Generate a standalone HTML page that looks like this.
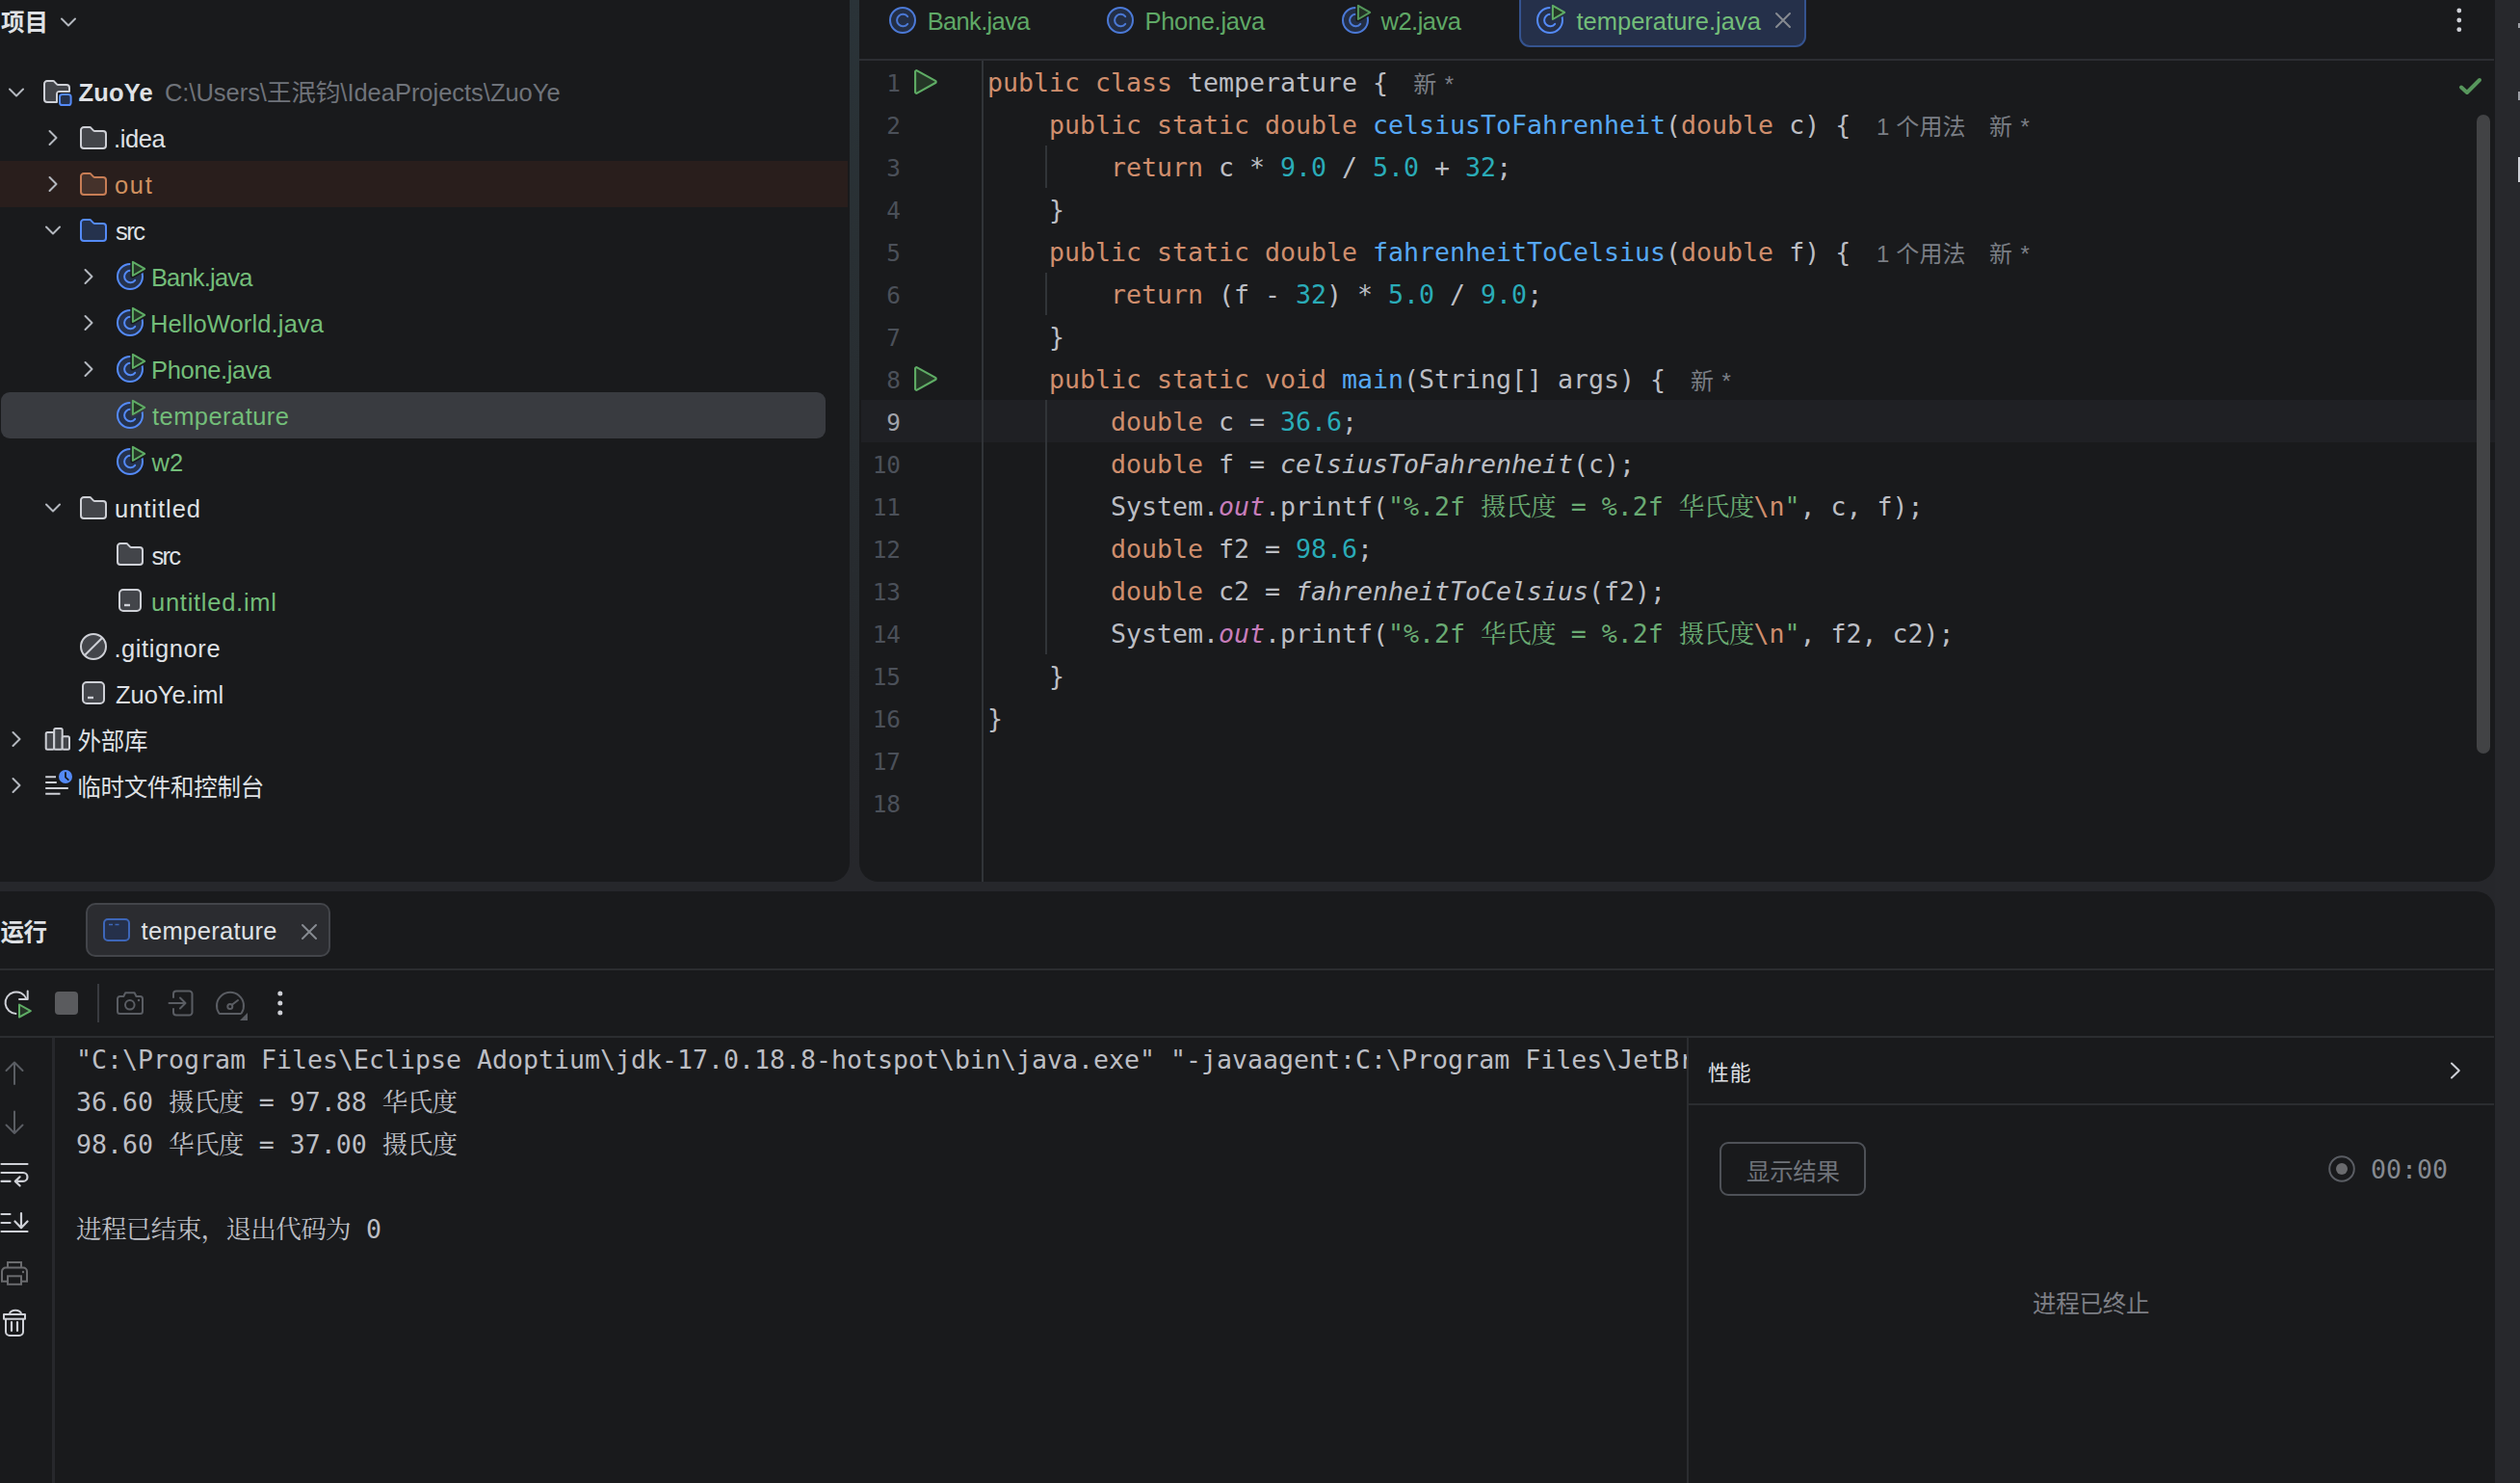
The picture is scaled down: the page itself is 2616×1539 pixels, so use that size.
<!DOCTYPE html>
<html lang="zh-CN"><head><meta charset="utf-8"><title>ZuoYe – temperature.java</title>
<style>
*{box-sizing:border-box}
html,body{margin:0;padding:0}
body{width:2616px;height:1539px;overflow:hidden;position:relative;background:#26272b;
 font-family:"Liberation Sans","Noto Sans CJK SC",sans-serif;font-size:25px;color:#dfe1e5;}
.abs{position:absolute}
.panel{position:absolute;background:#191a1c;border-radius:20px}
.t{position:absolute;white-space:pre;line-height:48px;height:48px}
.ui{font-family:"Liberation Sans","Noto Sans CJK SC",sans-serif;font-size:25.5px}
.cjk{font-family:"Noto Sans CJK SC","Liberation Sans",sans-serif;font-size:24.5px}
.mono{font-family:"DejaVu Sans Mono","Liberation Mono","Noto Serif CJK SC",monospace;font-size:26.58px}
.ic{position:absolute;width:32px;height:32px;overflow:visible}
.grn{color:#73bd79}
.gray{color:#6f737a}
.row{position:absolute;left:0;height:48px}
.cl{position:absolute;left:1025px;height:44px;line-height:44px;white-space:pre;color:#bcbec4;
 font-family:"DejaVu Sans Mono","Liberation Mono","Noto Serif CJK SC",monospace;font-size:26.58px}
.cl .z{letter-spacing:-0.67px}
.k{color:#cf8e6d}.f{color:#56a8f5}.n{color:#2aacb8}.s{color:#6aab73}.o{color:#c77dbb;font-style:italic}.i{font-style:italic}
.ln{position:absolute;width:60px;text-align:right;height:44px;line-height:44px;color:#4b5059;
 font-family:"DejaVu Sans Mono","Liberation Mono",monospace;font-size:24.4px}
.hint{position:absolute;height:44px;line-height:44px;white-space:pre;color:#7a7e85;
 font-family:"Liberation Sans","Noto Sans CJK SC",sans-serif;font-size:24px}
.con{position:absolute;left:79px;height:44px;line-height:44px;white-space:pre;color:#bcbec4;
 font-family:"DejaVu Sans Mono","Liberation Mono","Noto Serif CJK SC",monospace;font-size:26.58px}
.con .z{letter-spacing:-0.67px}
.hl{position:absolute;background:#2b2d30}
</style></head>
<body>
<div class="abs" style="left:878px;top:0;width:18px;height:920px;background:linear-gradient(#2a3338 0px,#293034 250px,#272b2f 600px,#26272b 900px)"></div>
<div class="panel" style="left:-40px;top:-40px;width:922px;height:955px"></div>
<div class="panel" style="left:892px;top:-40px;width:1698px;height:955px"></div>
<div class="panel" style="left:-40px;top:925px;width:2630px;height:700px"></div>
<div class="t" id="hdr" style="left:1.10px;top:-0.55px;letter-spacing:-0.200px;font-weight:bold;font-family:'Noto Sans CJK SC',sans-serif;font-size:24.5px;height:46px;line-height:46px">项目</div>
<svg class="ic" style="left:55.00px;top:7.00px;width:32px;height:32px" viewBox="0 0 16 16" fill="none"><path d="M4.5 6.25L8 9.75L11.5 6.25" stroke="#b4b8bf" stroke-width="1" stroke-linecap="round" stroke-linejoin="round"/></svg>
<div class="abs" style="left:0;top:167px;width:880px;height:48px;background:#291e1c"></div>
<div class="abs" style="left:1px;top:407px;width:856px;height:48px;background:#393b40;border-radius:9px"></div>
<svg class="ic" style="left:1.00px;top:79.50px;width:32px;height:32px" viewBox="0 0 16 16" fill="none"><path d="M4.5 6.25L8 9.75L11.5 6.25" stroke="#b4b8bf" stroke-width="1" stroke-linecap="round" stroke-linejoin="round"/></svg>
<svg class="ic" style="left:42.70px;top:79.20px;width:32px;height:32px" viewBox="0 0 16 16" fill="none"><path d="M1.5 4A1.5 1.5 0 0 1 3 2.5H6.1a.6.6 0 0 1 .42.17L8.1 4.3a.7.7 0 0 0 .5.2H13A1.5 1.5 0 0 1 14.5 6V8H9.5A1.5 1.5 0 0 0 8 9.5V13.5H3A1.5 1.5 0 0 1 1.5 12Z" fill="#43454a" stroke="#ced0d6" stroke-linejoin="round"/><rect x="8.6" y="8.6" width="7.4" height="7.4" fill="#191a1c"/><rect x="9.5" y="9.5" width="5.8" height="5.5" rx="1.3" fill="#25324d" stroke="#548af7"/></svg>
<div class="t ui " id="tr0b" style="left:81.40px;top:71.75px;letter-spacing:0.175px;font-weight:bold;">ZuoYe</div>
<svg class="ic" style="left:39.20px;top:127.48px;width:32px;height:32px" viewBox="0 0 16 16" fill="none"><path d="M6.25 4.5L9.75 8L6.25 11.5" stroke="#b4b8bf" stroke-width="1" stroke-linecap="round" stroke-linejoin="round"/></svg>
<svg class="ic" style="left:81.00px;top:127.18px;width:32px;height:32px" viewBox="0 0 16 16" fill="none"><path d="M1.5 4A1.5 1.5 0 0 1 3 2.5H6.1a.6.6 0 0 1 .42.17L8.1 4.3a.7.7 0 0 0 .5.2H13A1.5 1.5 0 0 1 14.5 6v6A1.5 1.5 0 0 1 13 13.5H3A1.5 1.5 0 0 1 1.5 12Z" fill="#43454a" stroke="#ced0d6" stroke-width="1" stroke-linejoin="round"/></svg>
<div class="t ui " id="tr1" style="left:118.00px;top:119.50px;letter-spacing:-0.375px;">.idea</div>
<svg class="ic" style="left:39.20px;top:175.45px;width:32px;height:32px" viewBox="0 0 16 16" fill="none"><path d="M6.25 4.5L9.75 8L6.25 11.5" stroke="#b4b8bf" stroke-width="1" stroke-linecap="round" stroke-linejoin="round"/></svg>
<svg class="ic" style="left:81.00px;top:175.15px;width:32px;height:32px" viewBox="0 0 16 16" fill="none"><path d="M1.5 4A1.5 1.5 0 0 1 3 2.5H6.1a.6.6 0 0 1 .42.17L8.1 4.3a.7.7 0 0 0 .5.2H13A1.5 1.5 0 0 1 14.5 6v6A1.5 1.5 0 0 1 13 13.5H3A1.5 1.5 0 0 1 1.5 12Z" fill="#45322b" stroke="#c77d55" stroke-width="1" stroke-linejoin="round"/></svg>
<div class="t ui " id="tr2" style="left:119.00px;top:168.00px;letter-spacing:1.650px;color:#d0905f;">out</div>
<svg class="ic" style="left:39.00px;top:223.43px;width:32px;height:32px" viewBox="0 0 16 16" fill="none"><path d="M4.5 6.25L8 9.75L11.5 6.25" stroke="#b4b8bf" stroke-width="1" stroke-linecap="round" stroke-linejoin="round"/></svg>
<svg class="ic" style="left:81.00px;top:223.12px;width:32px;height:32px" viewBox="0 0 16 16" fill="none"><path d="M1.5 4A1.5 1.5 0 0 1 3 2.5H6.1a.6.6 0 0 1 .42.17L8.1 4.3a.7.7 0 0 0 .5.2H13A1.5 1.5 0 0 1 14.5 6v6A1.5 1.5 0 0 1 13 13.5H3A1.5 1.5 0 0 1 1.5 12Z" fill="#25324d" stroke="#548af7" stroke-width="1" stroke-linejoin="round"/></svg>
<div class="t ui " id="tr3" style="left:120.00px;top:216.00px;letter-spacing:-1.550px;">src</div>
<svg class="ic" style="left:76.10px;top:271.40px;width:32px;height:32px" viewBox="0 0 16 16" fill="none"><path d="M6.25 4.5L9.75 8L6.25 11.5" stroke="#b4b8bf" stroke-width="1" stroke-linecap="round" stroke-linejoin="round"/></svg>
<svg class="ic" style="left:118.80px;top:271.10px;width:32px;height:32px" viewBox="0 0 16 16" fill="none"><circle cx="8" cy="8" r="6.5" fill="#25324d" stroke="#548af7"/><path d="M10.6 9.9A3.1 3.1 0 1 1 10.6 6.1" stroke="#548af7" stroke-width="1" fill="none" stroke-linecap="round"/><path d="M9.45 0.4V7.5L15.6 3.95Z" fill="#191a1c" stroke="#191a1c" stroke-width="2.6" stroke-linejoin="round"/><path d="M9.45 0.4V7.5L15.6 3.95Z" fill="#253627" stroke="#5fad65" stroke-width="1" stroke-linejoin="round"/></svg>
<div class="t ui grn" id="tr4" style="left:156.90px;top:264.00px;letter-spacing:-0.812px;">Bank.java</div>
<svg class="ic" style="left:76.10px;top:319.38px;width:32px;height:32px" viewBox="0 0 16 16" fill="none"><path d="M6.25 4.5L9.75 8L6.25 11.5" stroke="#b4b8bf" stroke-width="1" stroke-linecap="round" stroke-linejoin="round"/></svg>
<svg class="ic" style="left:118.80px;top:319.07px;width:32px;height:32px" viewBox="0 0 16 16" fill="none"><circle cx="8" cy="8" r="6.5" fill="#25324d" stroke="#548af7"/><path d="M10.6 9.9A3.1 3.1 0 1 1 10.6 6.1" stroke="#548af7" stroke-width="1" fill="none" stroke-linecap="round"/><path d="M9.45 0.4V7.5L15.6 3.95Z" fill="#191a1c" stroke="#191a1c" stroke-width="2.6" stroke-linejoin="round"/><path d="M9.45 0.4V7.5L15.6 3.95Z" fill="#253627" stroke="#5fad65" stroke-width="1" stroke-linejoin="round"/></svg>
<div class="t ui grn" id="tr5" style="left:156.00px;top:312.00px;letter-spacing:0.137px;">HelloWorld.java</div>
<svg class="ic" style="left:76.10px;top:367.35px;width:32px;height:32px" viewBox="0 0 16 16" fill="none"><path d="M6.25 4.5L9.75 8L6.25 11.5" stroke="#b4b8bf" stroke-width="1" stroke-linecap="round" stroke-linejoin="round"/></svg>
<svg class="ic" style="left:118.80px;top:367.05px;width:32px;height:32px" viewBox="0 0 16 16" fill="none"><circle cx="8" cy="8" r="6.5" fill="#25324d" stroke="#548af7"/><path d="M10.6 9.9A3.1 3.1 0 1 1 10.6 6.1" stroke="#548af7" stroke-width="1" fill="none" stroke-linecap="round"/><path d="M9.45 0.4V7.5L15.6 3.95Z" fill="#191a1c" stroke="#191a1c" stroke-width="2.6" stroke-linejoin="round"/><path d="M9.45 0.4V7.5L15.6 3.95Z" fill="#253627" stroke="#5fad65" stroke-width="1" stroke-linejoin="round"/></svg>
<div class="t ui grn" id="tr6" style="left:157.10px;top:360.00px;letter-spacing:-0.357px;">Phone.java</div>
<svg class="ic" style="left:118.80px;top:415.02px;width:32px;height:32px" viewBox="0 0 16 16" fill="none"><circle cx="8" cy="8" r="6.5" fill="#25324d" stroke="#548af7"/><path d="M10.6 9.9A3.1 3.1 0 1 1 10.6 6.1" stroke="#548af7" stroke-width="1" fill="none" stroke-linecap="round"/><path d="M9.45 0.4V7.5L15.6 3.95Z" fill="#393b40" stroke="#393b40" stroke-width="2.6" stroke-linejoin="round"/><path d="M9.45 0.4V7.5L15.6 3.95Z" fill="#253627" stroke="#5fad65" stroke-width="1" stroke-linejoin="round"/></svg>
<div class="t ui grn" id="tr7" style="left:158.00px;top:408.00px;letter-spacing:0.440px;">temperature</div>
<svg class="ic" style="left:118.80px;top:463.00px;width:32px;height:32px" viewBox="0 0 16 16" fill="none"><circle cx="8" cy="8" r="6.5" fill="#25324d" stroke="#548af7"/><path d="M10.6 9.9A3.1 3.1 0 1 1 10.6 6.1" stroke="#548af7" stroke-width="1" fill="none" stroke-linecap="round"/><path d="M9.45 0.4V7.5L15.6 3.95Z" fill="#191a1c" stroke="#191a1c" stroke-width="2.6" stroke-linejoin="round"/><path d="M9.45 0.4V7.5L15.6 3.95Z" fill="#253627" stroke="#5fad65" stroke-width="1" stroke-linejoin="round"/></svg>
<div class="t ui grn" id="tr8" style="left:157.50px;top:456.00px;">w2</div>
<svg class="ic" style="left:39.00px;top:511.28px;width:32px;height:32px" viewBox="0 0 16 16" fill="none"><path d="M4.5 6.25L8 9.75L11.5 6.25" stroke="#b4b8bf" stroke-width="1" stroke-linecap="round" stroke-linejoin="round"/></svg>
<svg class="ic" style="left:81.00px;top:510.98px;width:32px;height:32px" viewBox="0 0 16 16" fill="none"><path d="M1.5 4A1.5 1.5 0 0 1 3 2.5H6.1a.6.6 0 0 1 .42.17L8.1 4.3a.7.7 0 0 0 .5.2H13A1.5 1.5 0 0 1 14.5 6v6A1.5 1.5 0 0 1 13 13.5H3A1.5 1.5 0 0 1 1.5 12Z" fill="#43454a" stroke="#ced0d6" stroke-width="1" stroke-linejoin="round"/></svg>
<div class="t ui " id="tr9" style="left:119.00px;top:503.50px;letter-spacing:0.971px;">untitled</div>
<svg class="ic" style="left:118.80px;top:558.95px;width:32px;height:32px" viewBox="0 0 16 16" fill="none"><path d="M1.5 4A1.5 1.5 0 0 1 3 2.5H6.1a.6.6 0 0 1 .42.17L8.1 4.3a.7.7 0 0 0 .5.2H13A1.5 1.5 0 0 1 14.5 6v6A1.5 1.5 0 0 1 13 13.5H3A1.5 1.5 0 0 1 1.5 12Z" fill="#43454a" stroke="#ced0d6" stroke-width="1" stroke-linejoin="round"/></svg>
<div class="t ui " id="tr10" style="left:157.50px;top:553.00px;letter-spacing:-1.700px;">src</div>
<svg class="ic" style="left:118.80px;top:606.93px;width:32px;height:32px" viewBox="0 0 16 16" fill="none"><rect x="2.5" y="2.5" width="11" height="11" rx="2" fill="#43454a" stroke="#ced0d6"/><path d="M5 10.5H8" stroke="#ced0d6" stroke-width="1.2"/></svg>
<div class="t ui grn" id="tr11" style="left:157.00px;top:601.00px;letter-spacing:0.735px;">untitled.iml</div>
<svg class="ic" style="left:81.00px;top:654.90px;width:32px;height:32px" viewBox="0 0 16 16" fill="none"><circle cx="8" cy="8" r="6.5" fill="#43454a" stroke="#ced0d6"/><path d="M3.6 12.4L12.4 3.6" stroke="#ced0d6"/></svg>
<div class="t ui " id="tr12" style="left:118.40px;top:649.00px;letter-spacing:0.590px;">.gitignore</div>
<svg class="ic" style="left:81.00px;top:702.88px;width:32px;height:32px" viewBox="0 0 16 16" fill="none"><rect x="2.5" y="2.5" width="11" height="11" rx="2" fill="#43454a" stroke="#ced0d6"/><path d="M5 10.5H8" stroke="#ced0d6" stroke-width="1.2"/></svg>
<div class="t ui " id="tr13" style="left:119.90px;top:696.50px;letter-spacing:-0.009px;">ZuoYe.iml</div>
<svg class="ic" style="left:0.70px;top:751.15px;width:32px;height:32px" viewBox="0 0 16 16" fill="none"><path d="M6.25 4.5L9.75 8L6.25 11.5" stroke="#b4b8bf" stroke-width="1" stroke-linecap="round" stroke-linejoin="round"/></svg>
<svg class="abs" style="left:44px;top:752px" width="32" height="30" viewBox="0 0 32 30" fill="none"><rect x="3.7" y="8" width="8.5" height="17.7" rx="1.5" fill="#43454a" stroke="#ced0d6" stroke-width="2"/><rect x="12.2" y="4" width="8.5" height="21.7" rx="1.5" fill="#43454a" stroke="#ced0d6" stroke-width="2"/><rect x="20.7" y="12.3" width="7.3" height="13.4" rx="1.5" fill="#43454a" stroke="#ced0d6" stroke-width="2"/></svg>
<div class="t ui  cjk" id="tr14" style="left:80.40px;top:744.00px;letter-spacing:-0.200px;">外部库</div>
<svg class="ic" style="left:0.70px;top:799.12px;width:32px;height:32px" viewBox="0 0 16 16" fill="none"><path d="M6.25 4.5L9.75 8L6.25 11.5" stroke="#b4b8bf" stroke-width="1" stroke-linecap="round" stroke-linejoin="round"/></svg>
<svg class="abs" style="left:44px;top:798px" width="34" height="32" viewBox="0 0 34 32" fill="none"><path d="M3.2 8.300H14M3.2 14H14.800M3.2 20H26.800M3.2 25.700H18.500" stroke="#ced0d6" stroke-width="2"/><circle cx="24" cy="8" r="7" fill="#548af7"/><path d="M24 4V8.700L26.800 11.200" stroke="#191a1c" stroke-width="1.800" fill="none" stroke-linecap="round" stroke-linejoin="round"/></svg>
<div class="t ui  cjk" id="tr15" style="left:80.20px;top:792.00px;letter-spacing:-0.271px;">临时文件和控制台</div>
<div class="t ui gray" id="trpath" style="left:170.90px;top:72.00px;letter-spacing:-0.026px;">C:\Users\王泯钧\IdeaProjects\ZuoYe</div>
<div class="abs" style="left:892px;top:61px;width:1697px;height:2px;background:#2c2e32"></div>
<div class="abs" style="left:1577px;top:-20px;width:298px;height:69px;background:#25304a;border:2px solid #35538f;border-radius:11px"></div>
<svg class="ic" style="opacity:.85;left:921.00px;top:5.00px;width:32px;height:32px" viewBox="0 0 16 16" fill="none"><circle cx="8" cy="8" r="6.5" fill="#25324d" stroke="#548af7"/><path d="M10.6 9.9A3.1 3.1 0 1 1 10.6 6.1" stroke="#548af7" stroke-width="1" fill="none" stroke-linecap="round"/></svg>
<div class="t ui" id="tab0" style="left:962.70px;top:-2.00px;letter-spacing:-0.659px;color:#5fa866">Bank.java</div>
<svg class="ic" style="opacity:.85;left:1147.00px;top:5.00px;width:32px;height:32px" viewBox="0 0 16 16" fill="none"><circle cx="8" cy="8" r="6.5" fill="#25324d" stroke="#548af7"/><path d="M10.6 9.9A3.1 3.1 0 1 1 10.6 6.1" stroke="#548af7" stroke-width="1" fill="none" stroke-linecap="round"/></svg>
<div class="t ui" id="tab1" style="left:1188.50px;top:-2.00px;letter-spacing:-0.323px;color:#5fa866">Phone.java</div>
<svg class="ic" style="opacity:.85;left:1391.00px;top:5.00px;width:32px;height:32px" viewBox="0 0 16 16" fill="none"><circle cx="8" cy="8" r="6.5" fill="#25324d" stroke="#548af7"/><path d="M10.6 9.9A3.1 3.1 0 1 1 10.6 6.1" stroke="#548af7" stroke-width="1" fill="none" stroke-linecap="round"/><path d="M9.45 0.4V7.5L15.6 3.95Z" fill="#191a1c" stroke="#191a1c" stroke-width="2.6" stroke-linejoin="round"/><path d="M9.45 0.4V7.5L15.6 3.95Z" fill="#253627" stroke="#5fad65" stroke-width="1" stroke-linejoin="round"/></svg>
<div class="t ui" id="tab2" style="left:1433.50px;top:-2.00px;letter-spacing:-0.517px;color:#5fa866">w2.java</div>
<svg class="ic" style="left:1593.00px;top:5.00px;width:32px;height:32px" viewBox="0 0 16 16" fill="none"><circle cx="8" cy="8" r="6.5" fill="#25304a" stroke="#548af7"/><path d="M10.6 9.9A3.1 3.1 0 1 1 10.6 6.1" stroke="#548af7" stroke-width="1" fill="none" stroke-linecap="round"/><path d="M9.45 0.4V7.5L15.6 3.95Z" fill="#25304a" stroke="#25304a" stroke-width="2.6" stroke-linejoin="round"/><path d="M9.45 0.4V7.5L15.6 3.95Z" fill="#253627" stroke="#5fad65" stroke-width="1" stroke-linejoin="round"/></svg>
<div class="t ui" id="tab3" style="left:1636.50px;top:-2.00px;color:#73bd79">temperature.java</div>
<svg class="abs" style="left:1842px;top:12px" width="18" height="18" viewBox="0 0 18 18"><path d="M2 2L16 16M16 2L2 16" stroke="#868a91" stroke-width="2" stroke-linecap="round"/></svg>
<svg class="abs" style="left:2545px;top:4px" width="16" height="34" viewBox="0 0 16 34"><circle cx="7.8" cy="7" r="2.4" fill="#ced0d6"/><circle cx="7.8" cy="17" r="2.4" fill="#ced0d6"/><circle cx="7.8" cy="26.7" r="2.4" fill="#ced0d6"/></svg>
<div class="abs" style="left:894px;top:415px;width:1696px;height:44px;background:#1f2024"></div>
<div class="abs" style="left:1019px;top:63px;width:2px;height:852px;background:#313438"></div>
<div class="abs" style="left:1085px;top:151px;width:2px;height:44px;background:#313438"></div>
<div class="abs" style="left:1085px;top:283px;width:2px;height:44px;background:#313438"></div>
<div class="abs" style="left:1085px;top:415px;width:2px;height:264px;background:#313438"></div>
<div class="ln" style="left:875px;top:65px;color:#4b5059">1</div>
<div class="cl" id="c1" style="top:64px"><span class="k">public class</span> temperature {</div>
<div class="ln" style="left:875px;top:109px;color:#4b5059">2</div>
<div class="cl" id="c2" style="top:108px">    <span class="k">public static double</span> <span class="f">celsiusToFahrenheit</span>(<span class="k">double</span> c) {</div>
<div class="ln" style="left:875px;top:153px;color:#4b5059">3</div>
<div class="cl" id="c3" style="top:152px">        <span class="k">return</span> c * <span class="n">9.0</span> / <span class="n">5.0</span> + <span class="n">32</span>;</div>
<div class="ln" style="left:875px;top:197px;color:#4b5059">4</div>
<div class="cl" id="c4" style="top:196px">    }</div>
<div class="ln" style="left:875px;top:241px;color:#4b5059">5</div>
<div class="cl" id="c5" style="top:240px">    <span class="k">public static double</span> <span class="f">fahrenheitToCelsius</span>(<span class="k">double</span> f) {</div>
<div class="ln" style="left:875px;top:285px;color:#4b5059">6</div>
<div class="cl" id="c6" style="top:284px">        <span class="k">return</span> (f - <span class="n">32</span>) * <span class="n">5.0</span> / <span class="n">9.0</span>;</div>
<div class="ln" style="left:875px;top:329px;color:#4b5059">7</div>
<div class="cl" id="c7" style="top:328px">    }</div>
<div class="ln" style="left:875px;top:373px;color:#4b5059">8</div>
<div class="cl" id="c8" style="top:372px">    <span class="k">public static void</span> <span class="f">main</span>(String[] args) {</div>
<div class="ln" style="left:875px;top:417px;color:#a1a3ab">9</div>
<div class="cl" id="c9" style="top:416px">        <span class="k">double</span> c = <span class="n">36.6</span>;</div>
<div class="ln" style="left:875px;top:461px;color:#4b5059">10</div>
<div class="cl" id="c10" style="top:460px">        <span class="k">double</span> f = <span class="i">celsiusToFahrenheit</span>(c);</div>
<div class="ln" style="left:875px;top:505px;color:#4b5059">11</div>
<div class="cl" id="c11" style="top:504px">        System.<span class="o">out</span>.printf(<span class="s">"%.2f <span class="z">摄氏度</span> = %.2f <span class="z">华氏度</span></span><span class="k">\n</span><span class="s">"</span>, c, f);</div>
<div class="ln" style="left:875px;top:549px;color:#4b5059">12</div>
<div class="cl" id="c12" style="top:548px">        <span class="k">double</span> f2 = <span class="n">98.6</span>;</div>
<div class="ln" style="left:875px;top:593px;color:#4b5059">13</div>
<div class="cl" id="c13" style="top:592px">        <span class="k">double</span> c2 = <span class="i">fahrenheitToCelsius</span>(f2);</div>
<div class="ln" style="left:875px;top:637px;color:#4b5059">14</div>
<div class="cl" id="c14" style="top:636px">        System.<span class="o">out</span>.printf(<span class="s">"%.2f <span class="z">华氏度</span> = %.2f <span class="z">摄氏度</span></span><span class="k">\n</span><span class="s">"</span>, f2, c2);</div>
<div class="ln" style="left:875px;top:681px;color:#4b5059">15</div>
<div class="cl" id="c15" style="top:680px">    }</div>
<div class="ln" style="left:875px;top:725px;color:#4b5059">16</div>
<div class="cl" id="c16" style="top:724px">}</div>
<div class="ln" style="left:875px;top:769px;color:#4b5059">17</div>
<div class="ln" style="left:875px;top:813px;color:#4b5059">18</div>
<svg class="abs" style="left:947.6px;top:70.6px" width="27.3" height="28.4" viewBox="0 0 26 27" fill="none"><path d="M2 3.2V23.4a1.2 1.2 0 0 0 1.8 1L22 14.3a1.2 1.2 0 0 0 0-2.1L3.8 2.2A1.2 1.2 0 0 0 2 3.2Z" fill="#253627" stroke="#5fad65" stroke-width="2" stroke-linejoin="round"/></svg>
<svg class="abs" style="left:947.6px;top:378.6px" width="27.3" height="28.4" viewBox="0 0 26 27" fill="none"><path d="M2 3.2V23.4a1.2 1.2 0 0 0 1.8 1L22 14.3a1.2 1.2 0 0 0 0-2.1L3.8 2.2A1.2 1.2 0 0 0 2 3.2Z" fill="#253627" stroke="#5fad65" stroke-width="2" stroke-linejoin="round"/></svg>
<div class="hint" id="h1" style="left:1467.20px;top:66.00px;letter-spacing:1.000px;">新 *</div>
<div class="hint" id="h2a" style="left:1948.00px;top:110.00px;letter-spacing:0.125px;">1 个用法</div>
<div class="hint" id="h2b" style="left:2064.90px;top:110.00px;letter-spacing:1.000px;">新 *</div>
<div class="hint" id="h5a" style="left:1948.00px;top:242.00px;letter-spacing:0.125px;">1 个用法</div>
<div class="hint" id="h5b" style="left:2064.90px;top:242.00px;letter-spacing:1.000px;">新 *</div>
<div class="hint" id="h8" style="left:1754.90px;top:374.00px;letter-spacing:1.000px;">新 *</div>
<div class="abs" style="left:2571px;top:119px;width:14px;height:663px;border-radius:7px;background:#424345"></div>
<svg class="abs" style="left:2550px;top:78px" width="30" height="24" viewBox="0 0 30 24" fill="none"><path d="M5 12.5L11 18L24 5" stroke="#57965c" stroke-width="4" stroke-linecap="round" stroke-linejoin="round"/></svg>
<div class="t" id="runhdr" style="left:0.60px;top:942.05px;letter-spacing:-0.600px;font-weight:bold;font-family:'Noto Sans CJK SC',sans-serif;font-size:24.5px">运行</div>
<div class="abs" style="left:89px;top:937px;width:254px;height:56px;background:#2b2c30;border:2px solid #43454a;border-radius:10px"></div>
<svg class="abs" style="left:105px;top:951px" width="32" height="28" viewBox="0 0 32 28" fill="none"><rect x="3" y="3" width="26" height="22" rx="4" fill="#25304a" stroke="#3d66b8" stroke-width="2"/><path d="M8 8.5H12M14.5 8.5H18.5" stroke="#3d66b8" stroke-width="1.6"/></svg>
<div class="t ui" id="runtab" style="left:146.60px;top:942.00px;letter-spacing:0.340px;">temperature</div>
<svg class="abs" style="left:312px;top:958px" width="18" height="18" viewBox="0 0 18 18" fill="none"><path d="M2 2L16 16M16 2L2 16" stroke="#868a91" stroke-width="2" stroke-linecap="round"/></svg>
<div class="abs" style="left:0;top:1005px;width:2589px;height:2px;background:#2b2d30"></div>
<div class="abs" style="left:0;top:1075px;width:2589px;height:2px;background:#2b2d30"></div>
<svg class="abs" style="left:3px;top:1025px" width="34" height="36" viewBox="0 0 34 36" fill="none"><path d="M13.7 27A11.3 11.3 0 1 1 24.4 11.6" stroke="#ced0d6" stroke-width="2" stroke-linecap="round"/><path d="M25.7 3.5V12H17" stroke="#ced0d6" stroke-width="2" stroke-linecap="round" stroke-linejoin="round"/><path d="M17 30.5V17.5L28.8 24.2Z" fill="#191a1c" stroke="#191a1c" stroke-width="5" stroke-linejoin="round"/><path d="M17 30.5V17.5L28.8 24.2Z" fill="#253627" stroke="#5fad65" stroke-width="2" stroke-linejoin="round"/></svg>
<div class="abs" style="left:57px;top:1029px;width:24px;height:24px;border-radius:4px;background:#5a5b5e"></div>
<div class="abs" style="left:101px;top:1021px;width:2px;height:40px;background:#393b40"></div>
<svg class="abs" style="left:119px;top:1027px" width="32" height="28" viewBox="0 0 32 28" fill="none"><path d="M3 9.5A2.5 2.5 0 0 1 5.5 7H9.3L11.2 3.2H20.6L22.5 7H26.5A2.5 2.5 0 0 1 29 9.5V22.5A2.5 2.5 0 0 1 26.500 25H5.5A2.5 2.5 0 0 1 3 22.500Z" stroke="#5a5d63" stroke-width="2" stroke-linejoin="round"/><circle cx="15.8" cy="15.8" r="4.8" stroke="#5a5d63" stroke-width="2"/><circle cx="25" cy="11" r="1.2" fill="#5a5d63"/></svg>
<svg class="abs" style="left:173px;top:1025px" width="30" height="32" viewBox="0 0 30 32" fill="none"><path d="M7 10V6.500A3 3 0 0 1 10 3.500H23.500A3 3 0 0 1 26.500 6.500V25.500A3 3 0 0 1 23.500 28.500H10A3 3 0 0 1 7 25.500V22" stroke="#5a5d63" stroke-width="2" stroke-linecap="round"/><path d="M2.5 16H19M14 10.5L19.500 16L14 21.500" stroke="#5a5d63" stroke-width="2" stroke-linecap="round" stroke-linejoin="round"/></svg>
<svg class="abs" style="left:222px;top:1027px" width="38" height="34" viewBox="0 0 38 34" fill="none"><path d="M6.500 25A1.500 1.500 0 0 1 5.200 24.300A14 14 0 1 1 28.800 24.300A1.500 1.500 0 0 1 27.500 25Z" stroke="#5a5d63" stroke-width="2" stroke-linejoin="round"/><circle cx="16.8" cy="17.5" r="2.500" stroke="#5a5d63" stroke-width="2"/><path d="M18.800 15.800L25 11" stroke="#5a5d63" stroke-width="2" stroke-linecap="round"/><path d="M35 24V32H27Z" fill="#5a5d63"/></svg>
<svg class="abs" style="left:283px;top:1024px" width="16" height="34" viewBox="0 0 16 34"><circle cx="7.8" cy="7" r="2.5" fill="#ced0d6"/><circle cx="7.8" cy="17" r="2.5" fill="#ced0d6"/><circle cx="7.8" cy="27" r="2.5" fill="#ced0d6"/></svg>
<div class="abs" style="left:54px;top:1077px;width:3px;height:470px;background:#27282c"></div>
<svg class="abs" style="left:3px;top:1099px" width="26" height="28" viewBox="0 0 26 28" fill="none"><path d="M12 26V3.500M3.500 12L12 3.500L20.500 12" stroke="#5a5d63" stroke-width="2" stroke-linecap="round" stroke-linejoin="round"/></svg>
<svg class="abs" style="left:3px;top:1151px" width="26" height="28" viewBox="0 0 26 28" fill="none"><path d="M12 2.500V25M3.500 16.500L12 25L20.500 16.500" stroke="#5a5d63" stroke-width="2" stroke-linecap="round" stroke-linejoin="round"/></svg>
<svg class="abs" style="left:0px;top:1204px" width="32" height="30" viewBox="0 0 32 30" fill="none"><path d="M1.500 4H28.500M1.500 13H24A4.400 4.400 0 0 1 24 21.900H16.500M1.500 21.900H10.500M20.600 17.300L15.800 21.900L20.600 26.500" stroke="#ced0d6" stroke-width="2.200" stroke-linecap="round" stroke-linejoin="round"/></svg>
<svg class="abs" style="left:0px;top:1255px" width="32" height="28" viewBox="0 0 32 28" fill="none"><path d="M1.500 5H10.500M1.500 14H10.500M1.500 23H28.500M22 4V19M15.500 12.500L22 19.300L28.500 12.500" stroke="#ced0d6" stroke-width="2.200" stroke-linecap="round" stroke-linejoin="round"/></svg>
<svg class="abs" style="left:0px;top:1306px" width="32" height="30" viewBox="0 0 32 30" fill="none"><path d="M8 9.500V4H22V9.500" stroke="#6a6b6e" stroke-width="2" stroke-linejoin="miter"/><path d="M8 23.700H2V13.500A4 4 0 0 1 6 9.500H24A4 4 0 0 1 28 13.500V23.700H22" stroke="#6a6b6e" stroke-width="2"/><rect x="8" y="18.300" width="14" height="8.500" stroke="#6a6b6e" stroke-width="2"/><circle cx="24" cy="14" r="1.200" fill="#6a6b6e"/></svg>
<svg class="abs" style="left:0px;top:1356px" width="32" height="34" viewBox="0 0 32 34" fill="none"><path d="M10 7.500A6 3.700 0 0 1 22 7.500" stroke="#ced0d6" stroke-width="2"/><rect x="4" y="8" width="22" height="4.800" stroke="#ced0d6" stroke-width="2" stroke-linejoin="round"/><path d="M6 12.800V26A4 4 0 0 0 10 30H20A4 4 0 0 0 24 26V12.800" stroke="#ced0d6" stroke-width="2"/><path d="M12 16V25M18 16V25" stroke="#ced0d6" stroke-width="2.200" stroke-linecap="round"/></svg>
<div class="abs" style="left:58px;top:1078px;width:1693px;height:461px;overflow:hidden"><div class="con" id="con0" style="left:21px;top:0px">"C:\Program Files\Eclipse Adoptium\jdk-17.0.18.8-hotspot\bin\java.exe" "-javaagent:C:\Program Files\JetBrains\IntelliJ IDEA</div></div>
<div class="con" id="con1" style="top:1122px">36.60 <span class="z">摄氏度</span> = 97.88 <span class="z">华氏度</span></div>
<div class="con" id="con2" style="top:1166px">98.60 <span class="z">华氏度</span> = 37.00 <span class="z">摄氏度</span></div>
<div class="con" id="con4" style="top:1254px"><span class="z">进程已结束，退出代码为</span> 0</div>
<div class="abs" style="left:1751px;top:1077px;width:2px;height:470px;background:#2b2d30"></div>
<div class="abs" style="left:1753px;top:1145px;width:836px;height:2px;background:#2b2d30"></div>
<div class="t" id="perf" style="left:1773.10px;top:1088.25px;letter-spacing:0.900px;font-family:'Noto Sans CJK SC',sans-serif;font-size:21.8px;color:#dfe1e5">性能</div>
<svg class="abs" style="left:2538px;top:1098px" width="22" height="26" viewBox="0 0 22 26" fill="none"><path d="M7 5.500L14.800 13L7 20.500" stroke="#ced0d6" stroke-width="2" stroke-linecap="round" stroke-linejoin="round"/></svg>
<div class="abs" style="left:1785px;top:1185px;width:152px;height:56px;border:2px solid #4e5157;border-radius:9px"></div>
<div class="t" id="btn" style="left:1813.00px;top:1190.50px;letter-spacing:-0.333px;font-family:'Noto Sans CJK SC',sans-serif;font-size:24.5px;color:#6f737a">显示结果</div>
<svg class="abs" style="left:2415px;top:1197px" width="32" height="32" viewBox="0 0 32 32" fill="none"><circle cx="16" cy="16" r="12.800" stroke="#5a5d63" stroke-width="2"/><circle cx="16" cy="16" r="6" fill="#6a6b6e"/></svg>
<div class="con" id="timer" style="left:2460.90px;top:1192.00px;color:#868a91">00:00</div>
<div class="t" id="term" style="left:2110.00px;top:1328.05px;letter-spacing:-0.250px;font-family:'Noto Sans CJK SC',sans-serif;font-size:24.5px;color:#7d7f85">进程已终止</div>
<div class="abs" style="left:2590px;top:0;width:26px;height:1539px;background:#27282c"></div>
<div class="abs" style="left:2614px;top:163px;width:2px;height:26px;background:#ced0d6"></div>
<div class="abs" style="left:2614px;top:95px;width:2px;height:9px;background:#9a9ca2"></div>
<div class="abs" style="left:2614px;top:24px;width:2px;height:5px;background:#9a9ca2"></div>
</body></html>
